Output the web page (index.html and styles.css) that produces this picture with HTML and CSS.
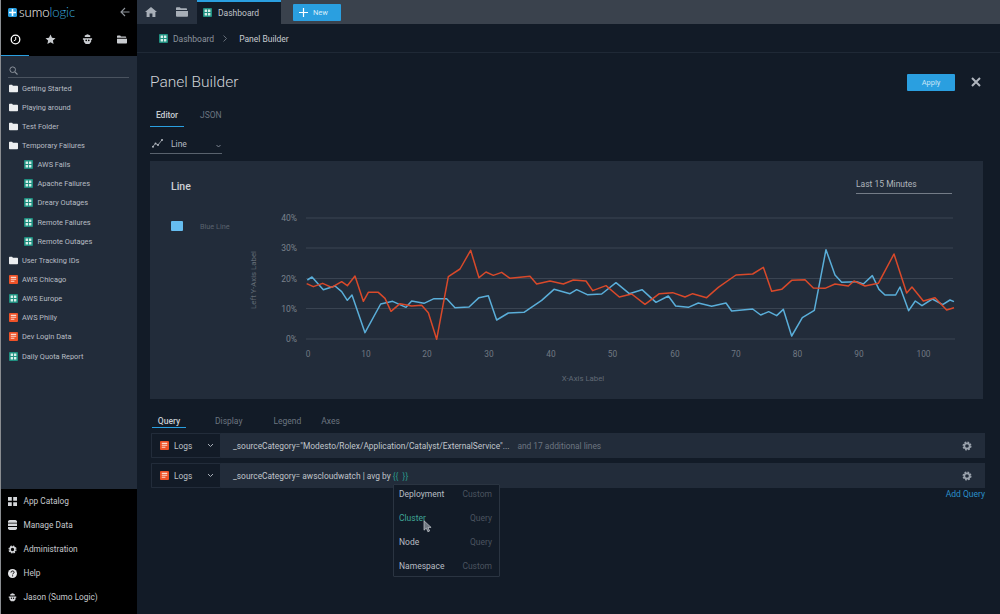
FILE: index.html
```html
<!DOCTYPE html>
<html lang="en">
<head>
<meta charset="utf-8">
<title>Panel Builder</title>
<link rel="stylesheet" href="styles.css">
</head>
<body>
<svg class="defs" width="0" height="0">
  <symbol id="i-folder" viewBox="0 0 10 9"><path d="M0 1.2C0 .7.4.4.8.4h2.6l1 1.1h4.8c.4 0 .8.3.8.8v5.6c0 .5-.4.8-.8.8H.8c-.4 0-.8-.3-.8-.8z" fill="currentColor"/></symbol>
  <symbol id="i-dash" viewBox="0 0 10 10"><rect width="10" height="10" rx="1" fill="#1f8f80"/><path d="M1.8 1.8h2.7v2.7H1.8zM5.5 1.8h2.7v2.7H5.5zM1.8 5.5h2.7v2.7H1.8zM5.5 5.5h2.7v2.7H5.5z" fill="#d8efe9"/></symbol>
  <symbol id="i-log" viewBox="0 0 10 10"><rect width="10" height="10" rx="1" fill="#ee5228"/><path d="M2 2h6v1.2H2zM2 4.2h6v1.2H2zM2 6.4h4v1.2H2z" fill="#fbd9cd"/></symbol>
  <symbol id="i-open" viewBox="0 0 12 10"><path d="M0 1c0-.5.4-.8.8-.8h3l1 1.1h5.4c.4 0 .8.3.8.8V3H0z" fill="currentColor"/><path d="M0 4h12v5c0 .5-.4.8-.8.8H.8C.4 9.800 0 9.500 0 9z" fill="currentColor"/></symbol>
  <symbol id="i-bot" viewBox="0 0 12 12"><path d="M3 1.500 6 .3l3 1.200v1.800H3zM1 4.500h10v1.700H10v2.300L8 11H4L2 8.500V6.200H1z" fill="currentColor"/><circle cx="4.600" cy="7" r=".9" fill="#000"/><circle cx="7.400" cy="7" r=".9" fill="#000"/></symbol>
  <symbol id="i-gear" viewBox="0 0 12 12"><circle cx="6" cy="6" r="3.200" fill="none" stroke="currentColor" stroke-width="2"/><circle cx="6" cy="6" r="4.600" fill="none" stroke="currentColor" stroke-width="1.600" stroke-dasharray="2.100 1.515"/></symbol>
</svg>

<div class="app">
  <aside class="side">
    <div class="side-top">
      <div class="brand">
        <span class="logo-mark"><svg width="9" height="9" viewBox="0 0 9 9"><path d="M3.700 1h1.600v2.700H8v1.600H5.300V8H3.700V5.300H1V3.700h2.700z" fill="#fff"/></svg></span>
        <span class="logo-text">sumo<span class="logo-accent">logic</span></span>
        <svg class="back" width="10" height="10" viewBox="0 0 10 10"><path d="M9.500 5H1.200M5 1 1 5l4 4" fill="none" stroke="#8f959c" stroke-width="1.100"/></svg>
      </div>
      <div class="side-tabs">
        <span class="side-tab is-on"><svg width="11" height="11" viewBox="0 0 11 11"><circle cx="5.500" cy="5.500" r="4.300" fill="none" stroke="#fff" stroke-width="1.300"/><path d="M5.700 3v2.800L3.800 6.800" fill="none" stroke="#fff" stroke-width="1"/></svg></span>
        <span class="side-tab"><svg width="11" height="11" viewBox="0 0 11 11"><path d="m5.500.6 1.500 3.200 3.500.4-2.600 2.400.7 3.500-3.100-1.800-3.100 1.800.7-3.500L.5 4.200 4 3.800z" fill="#c9ccd0"/></svg></span>
        <span class="side-tab tab-bot"><svg width="11" height="11"><use href="#i-bot"/></svg></span>
        <span class="side-tab tab-folder"><svg width="10" height="9"><use href="#i-open"/></svg></span>
      </div>
    </div>
    <div class="side-tree">
      <div class="search"><svg width="9" height="9" viewBox="0 0 9 9"><circle cx="3.700" cy="3.700" r="2.800" fill="none" stroke="#8b929b" stroke-width="1"/><path d="m5.800 5.800 2.700 2.700" stroke="#8b929b" stroke-width="1.100"/></svg></div>
      <ul class="tree">
        <li class="row"><svg class="ico folder"><use href="#i-folder"/></svg>Getting Started</li>
        <li class="row"><svg class="ico folder"><use href="#i-folder"/></svg>Playing around</li>
        <li class="row"><svg class="ico folder"><use href="#i-folder"/></svg>Test Folder</li>
        <li class="row"><svg class="ico folder"><use href="#i-folder"/></svg>Temporary Failures</li>
        <li class="row sub"><svg class="ico"><use href="#i-dash"/></svg>AWS Fails</li>
        <li class="row sub"><svg class="ico"><use href="#i-dash"/></svg>Apache Failures</li>
        <li class="row sub"><svg class="ico"><use href="#i-dash"/></svg>Dreary Outages</li>
        <li class="row sub"><svg class="ico"><use href="#i-dash"/></svg>Remote Failures</li>
        <li class="row sub"><svg class="ico"><use href="#i-dash"/></svg>Remote Outages</li>
        <li class="row"><svg class="ico folder"><use href="#i-folder"/></svg>User Tracking IDs</li>
        <li class="row"><svg class="ico"><use href="#i-log"/></svg>AWS Chicago</li>
        <li class="row"><svg class="ico"><use href="#i-dash"/></svg>AWS Europe</li>
        <li class="row"><svg class="ico"><use href="#i-log"/></svg>AWS Philly</li>
        <li class="row"><svg class="ico"><use href="#i-log"/></svg>Dev Login Data</li>
        <li class="row"><svg class="ico"><use href="#i-dash"/></svg>Daily Quota Report</li>
      </ul>
    </div>
    <ul class="side-menu">
      <li class="menu-item"><svg width="9" height="9" viewBox="0 0 9 9"><path d="M0 0h3.800v3.800H0zM5.200 0H9v3.800H5.200zM0 5.200h3.800V9H0zM5.200 5.200H9V9H5.200z" fill="#d5d7da"/></svg>App Catalog</li>
      <li class="menu-item"><svg width="9" height="10" viewBox="0 0 9 10"><path d="M1.500 0h6L9 1v1.700H0V1zM0 3.600h9v2.500H0zM0 7h9v2l-1.500 1h-6L0 9z" fill="#d5d7da"/></svg>Manage Data</li>
      <li class="menu-item"><svg width="9" height="9" class="gear-w"><use href="#i-gear"/></svg>Administration</li>
      <li class="menu-item"><svg width="9" height="9" viewBox="0 0 9 9"><circle cx="4.500" cy="4.500" r="4.500" fill="#e6e7e9"/><path d="M3 3.500C3 2.500 3.700 2 4.600 2S6.100 2.600 6.100 3.300C6.100 4.300 4.700 4.300 4.700 5.400" fill="none" stroke="#000" stroke-width="1"/><circle cx="4.600" cy="6.800" r=".6" fill="#000"/></svg>Help</li>
      <li class="menu-item"><svg width="9" height="9" class="gear-w"><use href="#i-bot"/></svg>Jason (Sumo Logic)</li>
    </ul>
  </aside>

  <main class="main">
    <nav class="topbar">
      <div class="top-icons">
        <svg width="12" height="10" viewBox="0 0 12 10"><path d="M6 0 0 5h1.600v5h3V6.500h2.800V10h3V5H12z" fill="#a8afb8"/></svg>
        <svg class="top-folder" width="12" height="10"><use href="#i-open"/></svg>
      </div>
      <div class="top-tab"><svg width="9" height="9"><use href="#i-dash"/></svg>Dashboard</div>
      <button class="new-btn"><svg width="9" height="9" viewBox="0 0 9 9"><path d="M3.900 0h1.200v3.900H9v1.200H5.100V9H3.900V5.100H0V3.900h3.900z" fill="#fff"/></svg>New</button>
    </nav>
    <div class="crumbs">
      <svg width="9" height="9"><use href="#i-dash"/></svg>
      <span class="crumb">Dashboard</span>
      <svg class="crumb-sep" width="4" height="7" viewBox="0 0 4 7"><path d="m.5.5 3 3-3 3" fill="none" stroke="#7a828c" stroke-width=".8"/></svg>
      <span class="crumb-now">Panel Builder</span>
    </div>

    <div class="content">
      <header class="title-row">
        <h1 class="title">Panel Builder</h1>
        <button class="apply">Apply</button>
        <svg class="close" width="10" height="10" viewBox="0 0 10 10"><path d="m1 1 8 8M9 1 1 9" stroke="#b0b6be" stroke-width="2"/></svg>
      </header>

      <div class="tabs edit-tabs">
        <span class="tab is-active">Editor</span>
        <span class="tab">JSON</span>
      </div>

      <div class="chart-type">
        <svg width="11" height="9" viewBox="0 0 11 9"><path d="M.5 8 3.500 4.500 6 6l4.300-5.500" fill="none" stroke="#b0b6be" stroke-width=".8"/><circle cx="3.500" cy="4.500" r="1" fill="#b0b6be"/><circle cx="6" cy="6" r="1" fill="#b0b6be"/><circle cx="1" cy="7.800" r="1" fill="#b0b6be"/><circle cx="10" cy="1" r="1" fill="#b0b6be"/></svg>
        <span class="type-label">Line</span>
        <svg class="type-chev" width="5" height="4" viewBox="0 0 5 4"><path d="m.5 1 2 2 2-2" fill="none" stroke="#98a0a9" stroke-width=".8"/></svg>
      </div>

      <section class="panel">
        <div class="panel-head">
          <h2 class="panel-title">Line</h2>
          <span class="range">Last 15 Minutes</span>
        </div>
        <div class="panel-body">
          <div class="legend"><span class="swatch"></span><span class="legend-text">Blue Line</span></div>
          <svg class="chart" width="722" height="190" viewBox="240 205 722 190">
            <g class="grid">
              <line x1="306" x2="953" y1="218" y2="218"/>
              <line x1="306" x2="953" y1="248" y2="248"/>
              <line x1="306" x2="953" y1="278.500" y2="278.500"/>
              <line x1="306" x2="953" y1="308.500" y2="308.500"/>
              <line x1="306" x2="955" y1="339" y2="339"/>
            </g>
            <g class="ylab">
              <text x="297" y="221">40%</text><text x="297" y="251">30%</text><text x="297" y="282">20%</text><text x="297" y="312">10%</text><text x="297" y="341.500">0%</text>
            </g>
            <g class="xlab">
              <text x="308" y="357">0</text><text x="366" y="357">10</text><text x="427" y="357">20</text><text x="489" y="357">30</text><text x="551" y="357">40</text><text x="612.500" y="357">50</text><text x="675" y="357">60</text><text x="736" y="357">70</text><text x="797.500" y="357">80</text><text x="859" y="357">90</text><text x="923.500" y="357">100</text>
            </g>
            <text class="axis" transform="translate(256 280) rotate(-90)">Left Y-Axis Label</text>
            <text class="axis" x="583" y="381">X-Axis Label</text>
            <g transform="translate(150 200) scale(.33333)">
              <polyline class="blue" points="472,240 486,231 520,269 555,258 575,275 592,301 606,285 645,398 692,312 728,304 768,322 785,303 822,310 852,296 890,296 915,323 957,321 987,293 1015,287 1040,360 1075,339 1122,337 1175,301 1212,268 1260,281 1280,269 1312,284 1355,282 1398,248 1438,281 1476,269 1518,307 1555,288 1577,318 1615,322 1645,309 1685,319 1728,309 1745,333 1808,327 1832,345 1856,335 1880,347 1900,328 1925,408 1957,353 1993,331 2028,149 2055,225 2075,247 2120,245 2140,252 2167,227 2187,268 2205,285 2237,285 2250,261 2276,332 2296,303 2316,317 2347,297 2378,314 2400,300 2412,305"/>
              <polyline class="red" points="470,251 490,260 518,250 545,262 575,245 592,257 615,228 640,304 655,277 685,277 705,295 723,334 750,311 785,318 815,316 835,338 860,418 895,230 930,207 962,151 987,233 1008,216 1030,226 1055,217 1080,235 1140,229 1160,252 1200,243 1240,252 1270,240 1308,243 1328,272 1368,257 1408,291 1445,282 1485,313 1528,281 1568,278 1605,291 1628,281 1670,293 1705,262 1758,225 1808,222 1840,202 1865,274 1895,268 1925,241 1965,239 1990,264 2025,265 2055,252 2095,258 2112,243 2145,258 2185,250 2232,162 2270,279 2286,261 2320,303 2355,293 2390,330 2412,323"/>
            </g>
          </svg>
        </div>
      </section>

      <div class="tabs query-tabs">
        <span class="qtab q1 is-active">Query</span>
        <span class="qtab q2">Display</span>
        <span class="qtab q3">Legend</span>
        <span class="qtab">Axes</span>
      </div>

      <div class="query">
        <div class="q-select"><svg width="9" height="9"><use href="#i-log"/></svg><span class="q-name">Logs</span><svg class="q-chev" width="7" height="5" viewBox="0 0 7 5"><path d="m1 1 2.500 2.500L6 1" fill="none" stroke="#a8afb8" stroke-width="1"/></svg></div>
        <div class="q-text">_sourceCategory="Modesto/Rolex/Application/Catalyst/ExternalService"...<span class="q-more">and 17 additional lines</span></div>
        <svg class="q-gear" width="10" height="10"><use href="#i-gear"/></svg>
      </div>
      <div class="query second">
        <div class="q-select"><svg width="9" height="9"><use href="#i-log"/></svg><span class="q-name">Logs</span><svg class="q-chev" width="7" height="5" viewBox="0 0 7 5"><path d="m1 1 2.500 2.500L6 1" fill="none" stroke="#a8afb8" stroke-width="1"/></svg></div>
        <div class="q-text">_sourceCategory= awscloudwatch | avg by <span class="q-brace">{{ &nbsp;}}</span></div>
        <svg class="q-gear" width="10" height="10"><use href="#i-gear"/></svg>
      </div>
      <div class="add-query">Add Query</div>
    </div>

    <ul class="popup">
      <li class="pop-row"><span>Deployment</span><span class="pop-kind">Custom</span></li>
      <li class="pop-row is-hover"><span>Cluster</span><span class="pop-kind">Query</span></li>
      <li class="pop-row"><span>Node</span><span class="pop-kind">Query</span></li>
      <li class="pop-row"><span>Namespace</span><span class="pop-kind">Custom</span></li>
    </ul>
    <svg class="cursor" width="10" height="13" viewBox="0 0 10 13"><path d="M1 .8v9.400l2.300-2.100 1.600 3.700 1.700-.8-1.600-3.600h3.100z" fill="#6f7780" stroke="#c9cdd2" stroke-width=".7"/></svg>
  </main>
</div>
</body>
</html>
```

FILE: styles.css
```css
* { box-sizing: border-box; }
html, body { margin: 0; padding: 0; height: 100%; overflow: hidden; }
body { font-family: Roboto, "Liberation Sans", sans-serif; background: #121b27; color: #c8ccd1; font-size: 8.5px; }
ul { list-style: none; margin: 0; padding: 0; }
h1, h2 { margin: 0; font-weight: 400; }
button { font-family: inherit; border: 0; }
.defs { position: absolute; }

.app { display: flex; height: 614px; }

/* sidebar */
.side { width: 137px; flex: none; display: flex; flex-direction: column; background: #222c3a; border-left: 1px solid #8a8d91; }
.side-top { height: 56px; background: #000; display: flex; flex-direction: column; }
.brand { height: 24px; display: flex; align-items: center; padding-left: 7px; }
.logo-mark { width: 9px; height: 9px; margin-right: 2px; border-radius: 1.500px; background: #2a9fe0; display: flex; align-items: center; justify-content: center; }
.logo-text { font-family: Lato, Roboto, sans-serif; font-size: 13.200px; font-weight: 300; color: #fff; letter-spacing: -.1px; }
.logo-accent { color: #3aa6dc; }
.back { margin-left: auto; margin-right: 7px; }
.side-tabs { display: flex; flex: 1; align-items: stretch; }
.side-tab { width: 28px; display: flex; align-items: center; justify-content: center; border-bottom: 1px solid transparent; color: #c9ccd0; }
.side-tab.is-on { border-bottom: 1px solid #2a9fe0; margin-right: 7px; }
.side-tab.tab-bot { margin-left: 10px; width: 26px; }
.side-tab.tab-folder { margin-left: 9px; width: 26px; }
.side-tree { flex: 1; }
.search { height: 22px; margin: 0 8px 0 7px; padding: 10px 0 0 1px; border-bottom: 1px solid #4a535f; display: flex; align-items: flex-start; }
.tree { padding-top: .500px; }
.row { height: 19.150px; display: flex; align-items: center; padding-left: 8px; color: #b8bdc4; font-size: 7.400px; white-space: nowrap; }
.row.sub { padding-left: 23px; }
.ico { width: 9px; height: 9px; margin-right: 4px; flex: none; }
.row.sub .ico { margin-right: 4.500px; }
.folder { color: #eceef0; }
.side-menu { height: 125px; flex: none; background: #000; }
.menu-item { height: 24px; display: flex; align-items: center; padding-left: 7px; gap: 6.500px; font-size: 8.300px; color: #c6c9cd; }
.gear-w { color: #d5d7da; }

/* main */
.main { flex: 1; min-width: 0; display: flex; flex-direction: column; position: relative; }
.topbar { height: 24px; flex: none; display: flex; background: #3a424d; }
.top-icons { width: 60px; background: #27313f; display: flex; align-items: center; padding-left: 8px; gap: 19px; }
.top-folder { color: #a8afb8; }
.top-tab { width: 84px; background: #121b27; border-top: 2px solid #2a9fe0; display: flex; align-items: center; padding: 0 0 1px 6px; gap: 6px; font-size: 8.500px; color: #c0c5cb; }
.new-btn { width: 48px; height: 17px; margin: 4px 0 0 12px; background: #2a9fe0; display: flex; align-items: center; gap: 5px; padding: 0 0 0 6px; color: #d5ecf9; font-size: 7.500px; border-radius: 1px; }
.crumbs { height: 29px; flex: none; display: flex; align-items: center; padding: 1px 0 0 22px; border-bottom: 1px solid #1f2936; font-size: 8.500px; }
.crumb { margin-left: 5px; color: #8d949d; }
.crumb-sep { margin: 0 12px 0 9px; }
.crumb-now { color: #c8ccd1; }

.content { flex: 1; padding: 0 15px 0 13px; display: flex; flex-direction: column; }
.title-row { height: 57px; flex: none; display: flex; align-items: center; padding-top: 1px; }
.title { font-size: 15.500px; font-weight: 300; color: #cfd3d8; }
.apply { width: 48px; height: 17px; margin-left: auto; margin-right: 16px; background: #2a9fe0; color: #c7e6f8; font-size: 7.500px; border-radius: 1px; }
.close { margin-right: 4px; }

.tabs { display: flex; }
.edit-tabs { height: 17px; flex: none; }
.tab { color: #6c7580; font-size: 8.500px; }
.tab.is-active { width: 34px; margin-right: 16px; text-align: center; color: #c8ccd1; font-weight: 500; border-bottom: 1px solid #2a9fe0; height: 17px; }

.chart-type { width: 72px; height: 19px; margin-top: 8px; flex: none; display: flex; align-items: center; padding: 0 0 1px 2px; border-bottom: 1px solid #59626d; }
.type-label { margin-left: 8px; color: #b4b9c0; font-size: 8.500px; }
.type-chev { margin-left: auto; margin-right: 1px; margin-top: 5px; }

.panel { width: 833px; height: 238px; margin-top: 7px; flex: none; background: #222c3a; display: flex; flex-direction: column; }
.panel-head { height: 44px; display: flex; align-items: flex-start; padding: 18px 31px 0 21px; }
.panel-title { font-size: 10.500px; font-weight: 500; color: #ccd0d5; margin-top: 1px; }
.range { width: 96px; margin-left: auto; padding-bottom: 4px; border-bottom: 1px solid #747c87; font-size: 8.500px; color: #b0b5bc; }
.panel-body { display: flex; align-items: flex-start; }
.legend { width: 90px; display: flex; align-items: center; padding: 16px 0 0 21px; }
.swatch { width: 12px; height: 10px; background: #66bdf0; border-radius: 1px; }
.legend-text { margin-left: 17px; font-size: 7.300px; color: #59626d; }
.chart { display: block; }
.grid line { stroke: #3a4452; stroke-width: 1; }
.ylab text { font-size: 8.500px; fill: #7a828c; text-anchor: end; }
.xlab text { font-size: 8.300px; fill: #717983; text-anchor: middle; }
.axis { font-size: 7.800px; fill: #616a75; text-anchor: middle; }
.blue, .red { fill: none; stroke-width: 4.500; stroke-linejoin: round; }
.blue { stroke: #5aaed9; }
.red { stroke: #d9492a; }

.query-tabs { height: 29px; flex: none; padding: 17px 0 0 2px; }
.qtab { color: #6c7580; font-size: 8.500px; line-height: 11px; }
.qtab.is-active { width: 34px; height: 12px; text-align: center; color: #c8ccd1; font-weight: 500; border-bottom: 1px solid #2a9fe0; margin-right: 29px; }
.q2 { margin-right: 31px; }
.q3 { margin-right: 20px; }

.query { width: 834px; height: 25px; margin-top: 5px; margin-left: 1px; flex: none; display: flex; align-items: center; background: #222c3a; }
.q-select { width: 70px; height: 25px; flex: none; display: flex; align-items: center; padding-left: 8px; background: #121b27; border: 1px solid #222c3a; border-radius: 1px; }
.q-name { margin-left: 5px; color: #bcc1c7; font-size: 8.400px; }
.q-chev { margin-left: auto; margin-right: 6px; }
.q-text { margin-left: 12px; font-size: 8.400px; color: #c0c5cb; white-space: nowrap; }
.q-more { margin-left: 8px; color: #6c7580; }
.q-brace { color: #2a9a8a; }
.q-gear { margin-left: auto; margin-right: 13px; color: #9aa2ac; }
.add-query { width: 835px; padding-top: 1px; text-align: right; color: #2a8fc9; font-size: 8.500px; }

.popup { position: absolute; left: 256px; top: 484px; width: 107px; height: 93px; background: #121b27; border: 1px solid #2a3441; border-radius: 1px; font-size: 8.500px; }
.pop-row { height: 24px; display: flex; justify-content: space-between; align-items: flex-start; padding: 4px 7px 0 5px; color: #b8bdc4; }
.pop-kind { color: #4a535f; }
.is-hover > span:first-child { color: #3fa596; }
.cursor { position: absolute; left: 286px; top: 520px; }
```
